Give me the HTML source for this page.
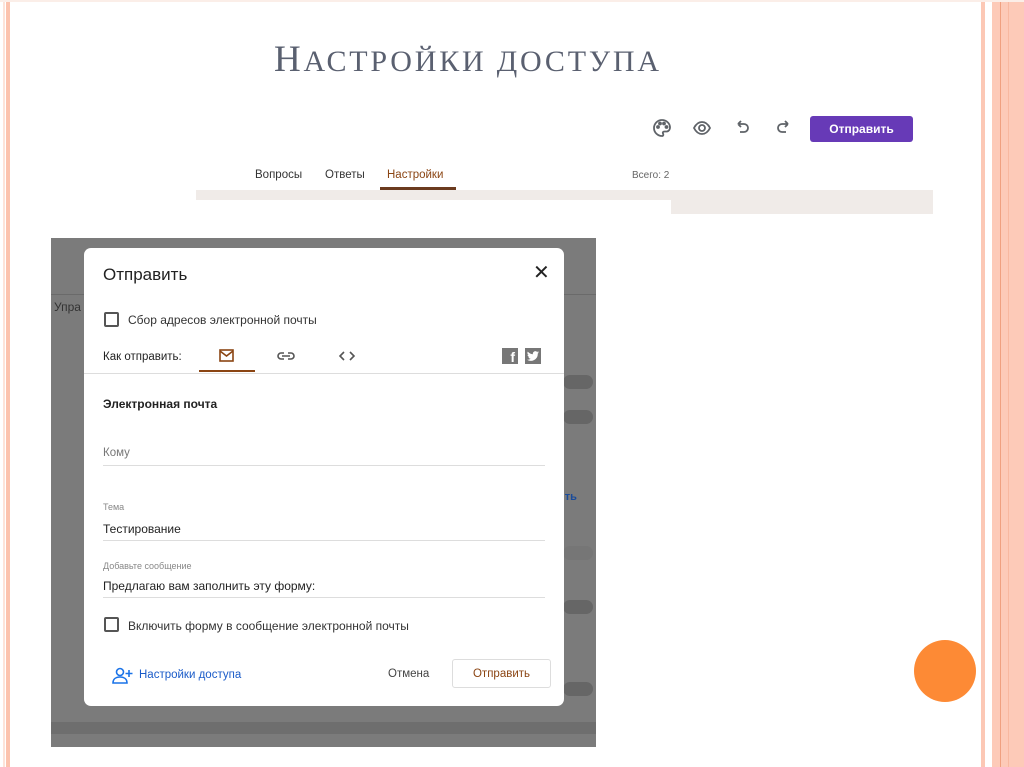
<!DOCTYPE html>
<html><head><meta charset="utf-8"><style>
*{margin:0;padding:0;box-sizing:border-box}
body{width:1024px;height:767px;background:#fff;position:relative;overflow:hidden;font-family:"Liberation Sans",sans-serif}
.a{position:absolute}
.t{font-family:"Liberation Sans",sans-serif}
</style></head><body>
<div class="a" style="left:3px;top:0;width:2px;height:767px;background:#fde3d9"></div>
<div class="a" style="left:6px;top:0;width:4px;height:767px;background:#fcc3ae"></div>
<div class="a" style="left:981px;top:0;width:4px;height:767px;background:#fcc8b5"></div>
<div class="a" style="left:992px;top:0;width:32px;height:767px;background:#fdcab8"></div>
<div class="a" style="left:1000px;top:0;width:1px;height:767px;background:#f0a080"></div>
<div class="a" style="left:1008px;top:0;width:1px;height:767px;background:#f8b8a0"></div>
<div class="a" style="left:0;top:0;width:1024px;height:2px;background:#fbeee8"></div>

<div class="a" style="left:274px;top:38px;font-family:'Liberation Serif',serif;font-size:37px;color:#5a6070;letter-spacing:2.8px;white-space:nowrap">Н<span style="font-size:30px">АСТРОЙКИ ДОСТУПА</span></div>

<svg class="a" style="left:650px;top:116px" width="150" height="24" viewBox="0 0 150 24" fill="none" stroke="#5f6368" stroke-width="1.8">
<path d="M12 4a8 8 0 1 0 0 16c1.5 0 1.5-1.5 1-2.5s0-2 1.5-2H17a4 4 0 0 0 3-4c0-4-3.6-7.5-8-7.5z"/>
<circle cx="8" cy="11" r="1" fill="#5f6368"/><circle cx="10" cy="7.5" r="1" fill="#5f6368"/><circle cx="14" cy="7.5" r="1" fill="#5f6368"/><circle cx="16.5" cy="11" r="1" fill="#5f6368"/>
<path d="M44 12c2-4 5-6 8-6s6 2 8 6c-2 4-5 6-8 6s-6-2-8-6z"/><circle cx="52" cy="12" r="3"/>
<path d="M88 8h6a4 4 0 0 1 0 8h-4M88 8l3-3M88 8l3 3"/>
<path d="M138 8h-6a4 4 0 0 0 0 8h4M138 8l-3-3M138 8l-3 3"/>
</svg>
<div class="a t" style="left:810px;top:116px;width:103px;height:26px;background:#673ab7;border-radius:3px;color:#fff;font-size:12px;font-weight:bold;line-height:26px;text-align:center">Отправить</div>

<div class="a t" style="left:255px;top:169px;font-size:11.5px;color:#333">Вопросы</div>
<div class="a t" style="left:325px;top:169px;font-size:11.5px;color:#333">Ответы</div>
<div class="a t" style="left:387px;top:169px;font-size:11.5px;color:#8b4513">Настройки</div>
<div class="a" style="left:380px;top:187px;width:76px;height:3px;background:#6b3b1f"></div>
<div class="a t" style="left:632px;top:170px;font-size:10px;color:#666">Всего: 2</div>
<div class="a" style="left:196px;top:190px;width:737px;height:10px;background:#f0ebe8"></div>
<div class="a" style="left:671px;top:200px;width:262px;height:14px;background:#f0ebe8"></div>

<div class="a" style="left:51px;top:238px;width:545px;height:509px;background:#7b7b7b"></div>
<div class="a" style="left:51px;top:294px;width:545px;height:1px;background:#6a6a6a"></div>
<div class="a" style="left:51px;top:722px;width:545px;height:12px;background:#6e6e6e"></div>
<div class="a t" style="left:54px;top:300px;font-size:12px;color:#333">Упра</div>
<div class="a t" style="left:558px;top:491px;font-size:11px;color:#1a4b9a;font-weight:bold">ить</div>
<div class="a" style="left:563px;top:375px;width:30px;height:14px;border-radius:7px;background:#666"></div>
<div class="a" style="left:563px;top:410px;width:30px;height:14px;border-radius:7px;background:#666"></div>
<div class="a" style="left:563px;top:546px;width:30px;height:14px;border-radius:7px;background:#767676"></div>
<div class="a" style="left:563px;top:600px;width:30px;height:14px;border-radius:7px;background:#666"></div>
<div class="a" style="left:563px;top:682px;width:30px;height:14px;border-radius:7px;background:#666"></div>

<div class="a" style="left:84px;top:248px;width:480px;height:458px;background:#fff;border-radius:7px"></div>
<div class="a t" style="left:103px;top:265px;font-size:17px;color:#222">Отправить</div>
<div class="a t" style="left:533px;top:260px;font-size:20px;color:#222">✕</div>
<div class="a" style="left:104px;top:312px;width:15px;height:15px;border:2px solid #555;border-radius:2px"></div>
<div class="a t" style="left:128px;top:313px;font-size:12px;color:#333">Сбор адресов электронной почты</div>
<div class="a t" style="left:103px;top:351px;font-size:11.5px;color:#222">Как отправить:</div>
<svg class="a" style="left:218px;top:348px" width="140" height="16" fill="none" stroke-width="1.6">
<rect x="2" y="2" width="13" height="11" stroke="#8b4513"/><path d="M2 3l6.5 5L15 3" stroke="#8b4513"/>
<path d="M66 5h-3a3 3 0 0 0 0 6h3M70 5h3a3 3 0 0 1 0 6h-3M64 8h8" stroke="#555"/>
<path d="M126 4l-4 4 4 4M132 4l4 4-4 4" stroke="#555"/>
</svg>
<div class="a" style="left:199px;top:370px;width:56px;height:2px;background:#8b4513"></div>
<div class="a" style="left:502px;top:348px;width:16px;height:16px;background:#777;color:#fff;font-weight:bold;font-size:14px;text-align:right;padding-right:3px;line-height:18px">f</div>
<div class="a" style="left:525px;top:348px;width:16px;height:16px;background:#777"></div>
<svg class="a" style="left:527px;top:351px" width="12" height="10" viewBox="0 0 12 10"><path d="M12 1.2c-.4.2-.9.3-1.4.4.5-.3.9-.8 1.1-1.3-.5.3-1 .5-1.6.6A2.5 2.5 0 0 0 5.9 3.2 7 7 0 0 1 .8.6a2.5 2.5 0 0 0 .8 3.3c-.4 0-.8-.1-1.1-.3 0 1.2.9 2.2 2 2.4-.4.1-.8.1-1.1 0 .3 1 1.2 1.7 2.3 1.7A5 5 0 0 1 0 8.7 7 7 0 0 0 10.8 2.8v-.3c.5-.3.9-.8 1.2-1.3z" fill="#fff"/></svg>
<div class="a" style="left:84px;top:373px;width:480px;height:1px;background:#ddd"></div>
<div class="a t" style="left:103px;top:397px;font-size:12px;font-weight:bold;color:#222">Электронная почта</div>
<div class="a t" style="left:103px;top:447px;font-size:11.5px;color:#777">Кому</div>
<div class="a" style="left:103px;top:465px;width:442px;height:1px;background:#ddd"></div>
<div class="a t" style="left:103px;top:502px;font-size:9px;color:#888">Тема</div>
<div class="a t" style="left:103px;top:522px;font-size:12px;color:#222">Тестирование</div>
<div class="a" style="left:103px;top:540px;width:442px;height:1px;background:#ddd"></div>
<div class="a t" style="left:103px;top:561px;font-size:9px;color:#888">Добавьте сообщение</div>
<div class="a t" style="left:103px;top:579px;font-size:12px;color:#222">Предлагаю вам заполнить эту форму:</div>
<div class="a" style="left:103px;top:597px;width:442px;height:1px;background:#ddd"></div>
<div class="a" style="left:104px;top:617px;width:15px;height:15px;border:2px solid #555;border-radius:2px"></div>
<div class="a t" style="left:128px;top:619px;font-size:12px;color:#333">Включить форму в сообщение электронной почты</div>
<svg class="a" style="left:112px;top:667px" width="22" height="18" fill="none" stroke="#1a73e8" stroke-width="1.6"><circle cx="8" cy="5" r="3.5"/><path d="M1 16c0-4 3-6 7-6s7 2 7 6z"/><path d="M17 3v7M13.5 6.5h7"/></svg>
<div class="a t" style="left:139px;top:669px;font-size:11.5px;color:#1a5bc8">Настройки доступа</div>
<div class="a t" style="left:388px;top:668px;font-size:11.5px;color:#444">Отмена</div>
<div class="a t" style="left:452px;top:659px;width:99px;height:29px;border:1px solid #ddd;border-radius:3px;font-size:11.5px;color:#8b4513;line-height:28px;text-align:center">Отправить</div>

<div class="a" style="left:914px;top:640px;width:62px;height:62px;border-radius:50%;background:#fd8a35"></div>
</body></html>
